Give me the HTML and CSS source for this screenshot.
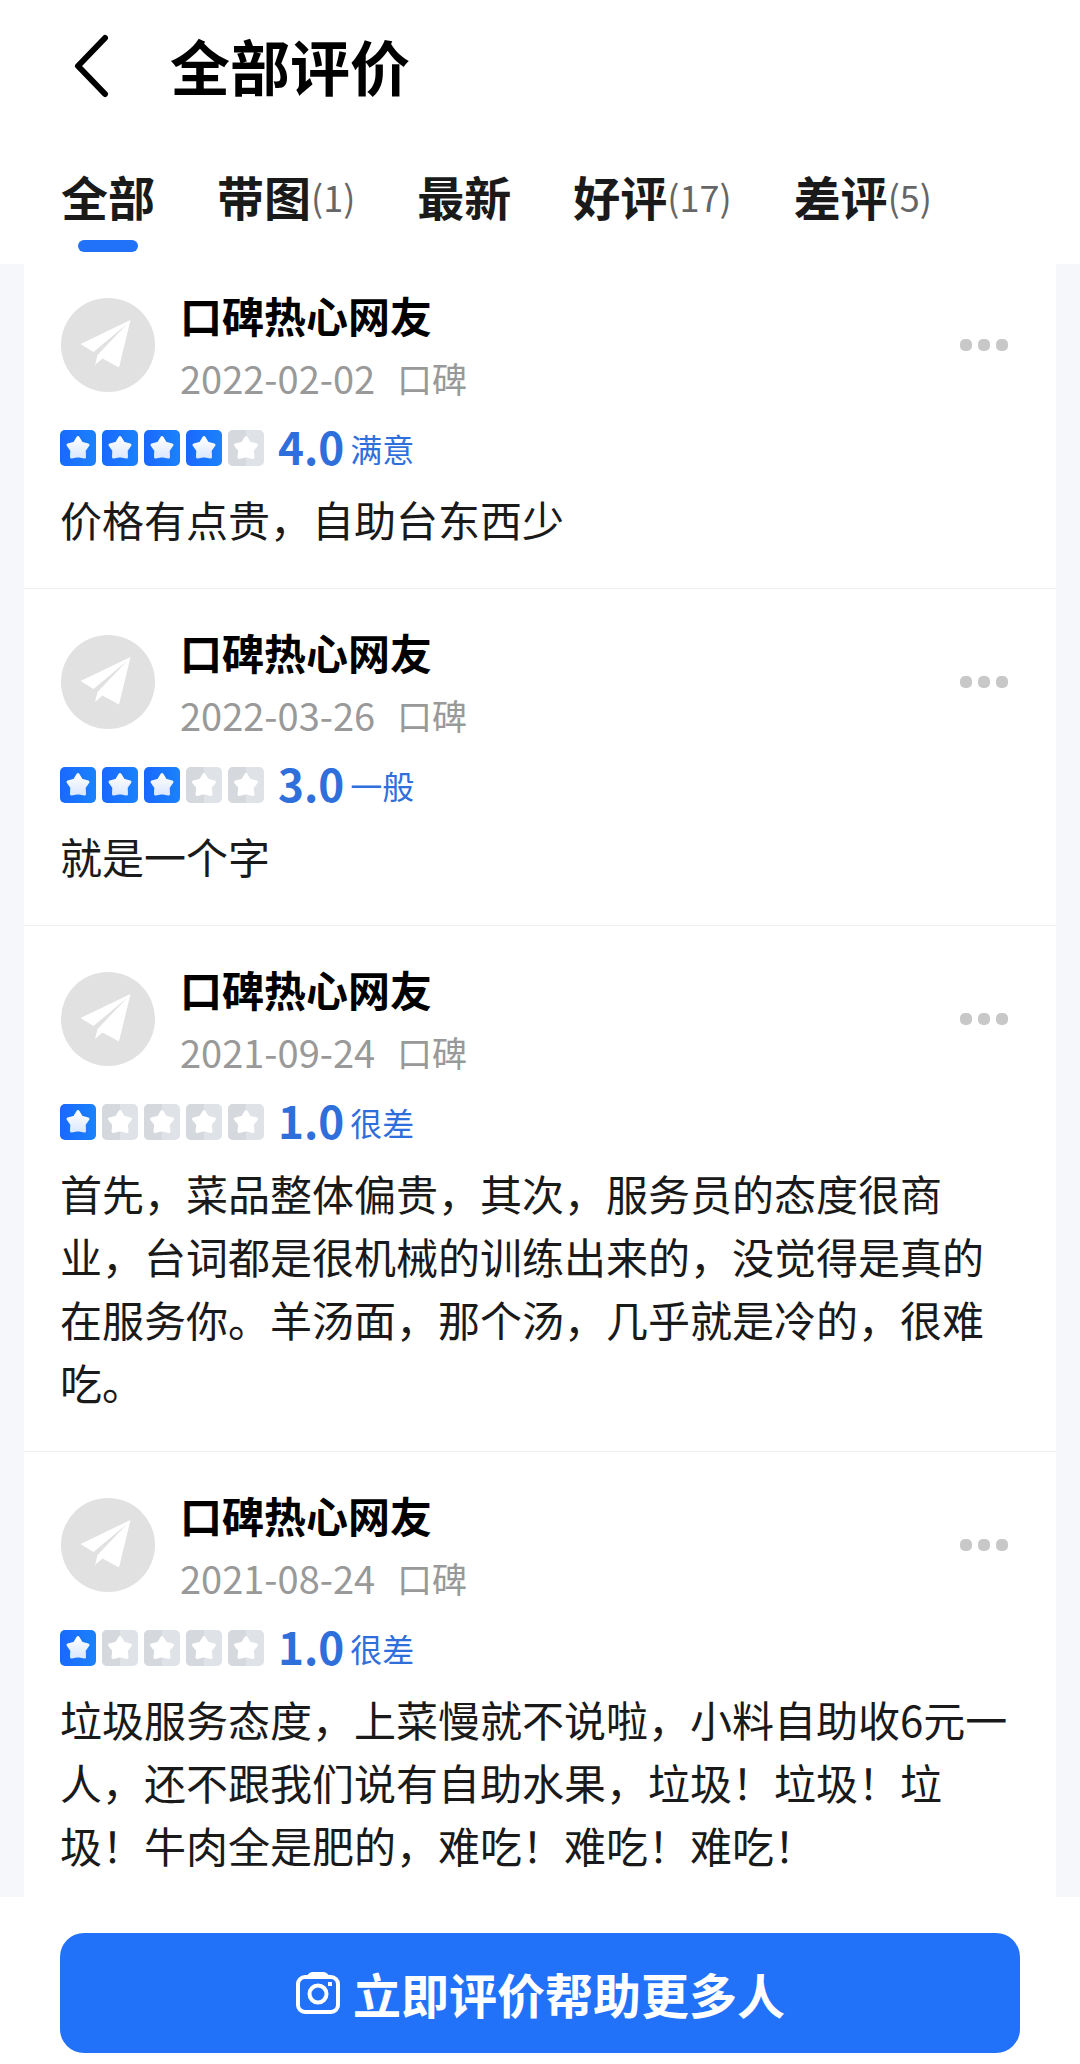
FILE: index.html
```html
<!DOCTYPE html>
<html lang="zh-CN">
<head>
    <meta charset="UTF-8">
    <meta name="viewport" content="width=device-width, initial-scale=1.0">
    <title>全部评价</title>
    <link rel="stylesheet" href="styles.css">
</head>
<body>
    <!-- Shared icons -->
    <svg class="sprite" aria-hidden="true">
        <defs>
            <linearGradient id="blue" x1="0" y1="0" x2="1" y2="0">
                <stop offset="0" stop-color="#1a68ff"/>
                <stop offset="1" stop-color="#1a82fb"/>
            </linearGradient>
            <linearGradient id="shine" x1="0" y1="0" x2="0" y2="1">
                <stop offset="0" stop-color="#ffffff"/>
                <stop offset="1" stop-color="#dce8fd"/>
            </linearGradient>
        </defs>
        <symbol id="star-on" viewBox="0 0 36 36">
            <rect width="36" height="36" rx="5" fill="url(#blue)"/>
            <path d="M18 7.500L21.500 13.300L28 15L24.200 20.300L24.500 27L18 25.700L11.500 27L11.800 20.300L8 15L14.500 13.300Z" fill="url(#shine)" stroke="url(#shine)" stroke-width="3" stroke-linejoin="round"/>
        </symbol>
        <symbol id="star-off" viewBox="0 0 36 36">
            <rect width="36" height="36" rx="5" fill="#dfe2e7"/>
            <path d="M5 0H18V36H5A5 5 0 0 1 0 31V5A5 5 0 0 1 5 0Z" fill="#d5d8dc"/>
            <path d="M18 7.500L21.500 13.300L28.500 15L24.200 20.300L25 27.500L18 25.700L11 27.500L11.800 20.300L7.500 15L14.500 13.300Z" fill="#fff" stroke="#fff" stroke-width="3" stroke-linejoin="round"/>
        </symbol>
        <symbol id="plane" viewBox="0 0 94 94">
            <circle cx="47" cy="47" r="47" fill="#e1e1e1"/>
            <path d="M69.500 22L19.500 46L32.500 54L66 26L36.500 57L34 67L41.500 60.500L58 69.500Z" fill="#fff"/>
        </symbol>
    </svg>

    <header class="header">
        <div class="title-bar">
            <button type="button" class="back" aria-label="返回">
                <svg width="36" height="64" viewBox="0 0 36 64"><path d="M31 4L4 32L31 60" fill="none" stroke="#000" stroke-width="6" stroke-linecap="round" stroke-linejoin="round"/></svg>
            </button>
            <h1>全部评价</h1>
        </div>
        <nav class="tabs">
            <a href="#all" class="tab active">全部</a>
            <a href="#photo" class="tab">带图<span class="count">(1)</span></a>
            <a href="#new" class="tab">最新</a>
            <a href="#good" class="tab">好评<span class="count">(17)</span></a>
            <a href="#bad" class="tab">差评<span class="count">(5)</span></a>
        </nav>
    </header>

    <main class="reviews">
        <article class="review">
            <div class="review-head">
                <svg class="avatar"><use href="#plane"/></svg>
                <div class="user">
                    <h2>口碑热心网友</h2>
                    <p class="meta"><time>2022-02-02</time><span>口碑</span></p>
                </div>
                <button type="button" class="more" aria-label="更多"><i></i><i></i><i></i></button>
            </div>
            <div class="rating">
                <svg><use href="#star-on"/></svg>
                <svg><use href="#star-on"/></svg>
                <svg><use href="#star-on"/></svg>
                <svg><use href="#star-on"/></svg>
                <svg><use href="#star-off"/></svg>
                <span class="score">4.0</span>
                <span class="level">满意</span>
            </div>
            <p class="comment">价格有点贵，自助台东西少</p>
        </article>

        <article class="review">
            <div class="review-head">
                <svg class="avatar"><use href="#plane"/></svg>
                <div class="user">
                    <h2>口碑热心网友</h2>
                    <p class="meta"><time>2022-03-26</time><span>口碑</span></p>
                </div>
                <button type="button" class="more" aria-label="更多"><i></i><i></i><i></i></button>
            </div>
            <div class="rating">
                <svg><use href="#star-on"/></svg>
                <svg><use href="#star-on"/></svg>
                <svg><use href="#star-on"/></svg>
                <svg><use href="#star-off"/></svg>
                <svg><use href="#star-off"/></svg>
                <span class="score">3.0</span>
                <span class="level">一般</span>
            </div>
            <p class="comment">就是一个字</p>
        </article>

        <article class="review">
            <div class="review-head">
                <svg class="avatar"><use href="#plane"/></svg>
                <div class="user">
                    <h2>口碑热心网友</h2>
                    <p class="meta"><time>2021-09-24</time><span>口碑</span></p>
                </div>
                <button type="button" class="more" aria-label="更多"><i></i><i></i><i></i></button>
            </div>
            <div class="rating">
                <svg><use href="#star-on"/></svg>
                <svg><use href="#star-off"/></svg>
                <svg><use href="#star-off"/></svg>
                <svg><use href="#star-off"/></svg>
                <svg><use href="#star-off"/></svg>
                <span class="score">1.0</span>
                <span class="level">很差</span>
            </div>
            <p class="comment">首先，菜品整体偏贵，其次，服务员的态度很商业，台词都是很机械的训练出来的，没觉得是真的在服务你。羊汤面，那个汤，几乎就是冷的，很难吃。</p>
        </article>

        <article class="review">
            <div class="review-head">
                <svg class="avatar"><use href="#plane"/></svg>
                <div class="user">
                    <h2>口碑热心网友</h2>
                    <p class="meta"><time>2021-08-24</time><span>口碑</span></p>
                </div>
                <button type="button" class="more" aria-label="更多"><i></i><i></i><i></i></button>
            </div>
            <div class="rating">
                <svg><use href="#star-on"/></svg>
                <svg><use href="#star-off"/></svg>
                <svg><use href="#star-off"/></svg>
                <svg><use href="#star-off"/></svg>
                <svg><use href="#star-off"/></svg>
                <span class="score">1.0</span>
                <span class="level">很差</span>
            </div>
            <p class="comment">垃圾服务态度，上菜慢就不说啦，小料自助收6元一人，还不跟我们说有自助水果，垃圾！垃圾！垃圾！牛肉全是肥的，难吃！难吃！难吃！</p>
        </article>
    </main>

    <footer class="footer">
        <button type="button" class="write">
            <svg width="46" height="44" viewBox="0 0 46 44">
                <rect x="3" y="6" width="40" height="35" rx="7" fill="none" stroke="#fff" stroke-width="4"/>
                <path d="M12 5Q14 1 18 1H28Q32 1 34 5V7H12Z" fill="#fff"/>
                <circle cx="23" cy="23" r="8.500" fill="none" stroke="#fff" stroke-width="4"/>
                <rect x="33" y="11" width="4" height="4" fill="#fff"/>
            </svg>
            立即评价帮助更多人
        </button>
    </footer>
</body>
</html>
```

FILE: styles.css
```css
* {
    box-sizing: border-box;
}
body {
    margin: 0;
    background-color: #fff;
    color: #1a1a1a;
    font-family: "Noto Sans CJK SC", sans-serif;
    text-spacing-trim: space-all;
}
h1, h2, p {
    margin: 0;
}
button {
    border: none;
    background: none;
    padding: 0;
    font-family: inherit;
    cursor: pointer;
}
.sprite {
    position: absolute;
    width: 0;
    height: 0;
}

/* Header */
.title-bar {
    display: flex;
    align-items: center;
    height: 132px;
    padding: 0 74px;
    gap: 60px;
}
.back {
    display: flex;
}
h1 {
    padding-bottom: 2px;
    color: #000;
    font-size: 60px;
    font-weight: 700;
    line-height: 84px;
}
.tabs {
    display: flex;
    gap: 62px;
    height: 132px;
    padding: 28px 61px 12px;
}
.tab {
    display: flex;
    position: relative;
    color: #1a1a1a;
    font-size: 47px;
    font-weight: 700;
    line-height: 72px;
    text-decoration: none;
}
.tab.active::after {
    content: "";
    position: absolute;
    left: 50%;
    bottom: 0;
    width: 60px;
    height: 12px;
    margin-left: -30px;
    border-radius: 6px;
    background-color: #2272f9;
}
.count {
    color: #666;
    font-size: 36px;
    font-weight: 400;
}

/* Reviews */
.reviews {
    padding: 0 24px;
    background-color: #f5f7fa;
}
.review {
    padding: 27px 36px 38px;
    border-bottom: 1px solid #eceef0;
    background-color: #fff;
}
.review:first-child {
    padding-top: 15px;
}
.review:last-child {
    padding-bottom: 21px;
    border-bottom: none;
}
.review-head {
    display: flex;
    align-items: center;
    height: 132px;
}
.avatar {
    width: 94px;
    height: 94px;
    margin: 0 25px 0 1px;
}
.user {
    flex: 1;
    padding-top: 2px;
    line-height: 63px;
}
h2 {
    color: #000;
    font-size: 42px;
    font-weight: 700;
}
.meta {
    display: flex;
    gap: 22px;
    color: #999;
    font-size: 35px;
}
.meta time {
    font-size: 38px;
}
.more {
    display: flex;
    gap: 6px;
    margin-right: 12px;
}
.more i {
    width: 12px;
    height: 12px;
    border-radius: 5px;
    background-color: #c8c8c8;
}
.rating {
    display: flex;
    align-items: center;
    gap: 6px;
    height: 36px;
    margin: 19px 0 21px;
    color: #2f6fdc;
}
.rating svg {
    width: 36px;
    height: 36px;
}
.score {
    margin-left: 8px;
    padding-bottom: 4px;
    font-size: 44px;
    font-weight: 700;
}
.level {
    font-size: 32px;
}
.comment {
    font-size: 42px;
    line-height: 63px;
}

/* Footer */
.footer {
    padding: 36px 60px 11px;
}
.write {
    display: flex;
    align-items: center;
    justify-content: center;
    gap: 12px;
    width: 100%;
    height: 120px;
    border-radius: 24px;
    background-color: #2272f9;
    color: #fff;
    font-size: 48px;
    font-weight: 700;
}
```
